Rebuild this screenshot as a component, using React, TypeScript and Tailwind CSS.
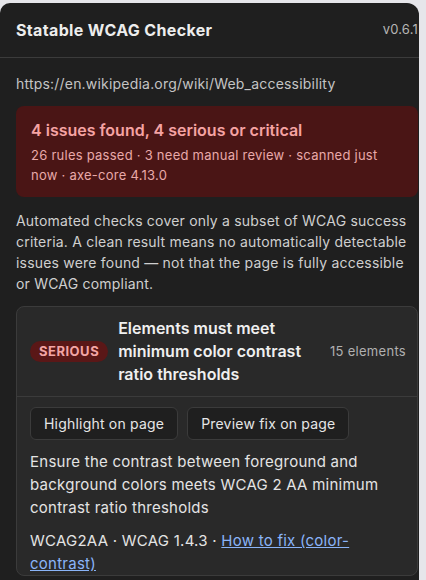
import React from 'react';

const font = { fontFamily: 'Inter, "Noto Sans", sans-serif' };

export default function App() {
  return (
    <div className="w-[426px] h-[580px] bg-[#e6e6ea] pt-[3px] overflow-hidden" style={font}>
      <div className="w-[419px] h-[577px] bg-[#1f1f1f] rounded-tr-[12px] rounded-tl-[10px] overflow-hidden">
        {/* Header */}
        <header className="flex items-center h-[55px] pl-4 border-b border-[#3b3b3b]">
          <h1 className="text-[16px] font-bold text-[#ededed] tracking-[0.35px]">Statable WCAG Checker</h1>
          <span className="ml-auto mr-[1px] text-[13px] tracking-[0.2px] text-[#b5b5b5] whitespace-nowrap">v0.6.1</span>
        </header>

        <div className="pl-4 pr-px">
          <p className="mt-[16px] text-[14px] leading-5 tracking-[0.2px] text-[#c4c4c4]">
            https://en.wikipedia.org/wiki/Web_accessibility
          </p>

          {/* Summary */}
          <div className="mt-[12px] rounded-lg bg-[#4a1515] px-[15px] pt-[12px] pb-[12px]">
            <div className="text-[16px] font-semibold leading-6 text-[#f5a3a3]">4 issues found, 4 serious or critical</div>
            <div className="mt-[3px] text-[13px] leading-5 tracking-[0.25px] text-[#e8a9a9]">
              26 rules passed · 3 need manual review · scanned just now · axe-core 4.13.0
            </div>
          </div>

          <p className="mt-[13px] text-[14px] leading-[21px] tracking-[0.2px] text-[#cfcfcf]">
            Automated checks cover only a subset of WCAG success criteria. A clean result means no automatically
            detectable issues were found — not that the page is fully accessible or WCAG compliant.
          </p>

          {/* Rule card */}
          <div className="mt-[12px] rounded-lg border border-[#3b3b3b] bg-[#292929]">
            <div className="flex items-center gap-[10px] pl-[13px] pr-[11px] py-[10px] border-b border-[#3b3b3b]">
              <span className="shrink-0 rounded-full bg-[#5a1717] px-[9px] py-[2px] text-[13px] leading-[17px] font-bold tracking-[0.5px] text-[#f3a5a5]">
                SERIOUS
              </span>
              <span className="flex-1 text-[16px] font-semibold leading-[23px] text-[#efefef]">
                Elements must meet minimum color contrast ratio thresholds
              </span>
              <span className="shrink-0 text-[13px] tracking-[0.3px] text-[#b0b0b0]">15 elements</span>
            </div>
            <div className="pl-[13px] pr-3 pt-[10px]">
              <div className="flex gap-[9px]">
                <button className="h-[33px] rounded-md border border-[#3b3b3b] bg-[#1f1f1f] px-[13px] text-[14px] tracking-[0.2px] text-[#e6e6e6]">
                  Highlight on page
                </button>
                <button className="h-[33px] rounded-md border border-[#3b3b3b] bg-[#1f1f1f] px-[13px] text-[14px] tracking-[0.2px] text-[#e6e6e6]">
                  Preview fix on page
                </button>
              </div>
              <p className="mt-[10px] text-[15px] leading-[23px] tracking-[0.25px] text-[#e4e4e4]">
                Ensure the contrast between foreground and background colors meets WCAG 2 AA minimum contrast ratio
                thresholds
              </p>
              <p className="mt-[10px] text-[15px] leading-[23px] tracking-[0.25px] text-[#e4e4e4]">
                WCAG2AA · WCAG 1.4.3 ·{' '}
                <a href="#" className="text-[#8ab4f8] underline">How to fix (color-contrast)</a>
              </p>
            </div>
          </div>
        </div>
      </div>
    </div>
  );
}
